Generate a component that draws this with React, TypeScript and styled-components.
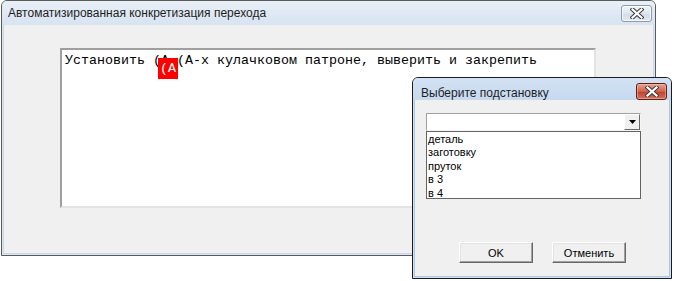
import * as React from "react";
import styled, { createGlobalStyle } from "styled-components";

const GlobalStyle = createGlobalStyle`
  html, body {
    margin: 0;
    padding: 0;
    background: #ffffff;
    overflow: hidden;
  }
  body {
    font-family: "Liberation Sans", Arial, sans-serif;
  }
`;

const CloseGlyph = () => (
  <svg width="14" height="11" viewBox="0 0 14 11">
    <path
      d="M2.5 1.5 L11.5 9.5 M11.5 1.5 L2.5 9.5"
      stroke="#3c3c3c"
      strokeWidth="4.2"
      strokeLinecap="square"
      fill="none"
    />
    <path
      d="M2.5 1.5 L11.5 9.5 M11.5 1.5 L2.5 9.5"
      stroke="#ffffff"
      strokeWidth="2.2"
      strokeLinecap="square"
      fill="none"
    />
  </svg>
);

const App = () => {
  const items = ["деталь", "заготовку", "пруток", "в 3", "в 4"];

  return (
    <>
      <GlobalStyle />
      <Desktop>
        <MainWindow>
          <MainTitleBar>
            <TitleText>Автоматизированная конкретизация перехода</TitleText>
            <CloseButton variant="gray">
              <CloseGlyph />
            </CloseButton>
          </MainTitleBar>
          <MainClient>
            <TextArea>
              <EditorLine>
                Установить (А (А-х кулачковом патроне, выверить и закрепить
              </EditorLine>
              <Marker>(А</Marker>
            </TextArea>
          </MainClient>
        </MainWindow>

        <Dialog>
          <DialogTitleBar>
            <TitleText>Выберите подстановку</TitleText>
            <CloseButton variant="red">
              <CloseGlyph />
            </CloseButton>
          </DialogTitleBar>
          <DialogClient>
            <Combo>
              <ComboField />
              <ComboArrow>
                <svg width="7" height="4" viewBox="0 0 7 4">
                  <path d="M0 0 L7 0 L3.5 4 Z" fill="#000" />
                </svg>
              </ComboArrow>
            </Combo>
            <List>
              {items.map((item) => (
                <ListItem key={item}>{item}</ListItem>
              ))}
            </List>
            <ButtonRow>
              <PushButton>OK</PushButton>
              <PushButton>Отменить</PushButton>
            </ButtonRow>
          </DialogClient>
        </Dialog>
      </Desktop>
    </>
  );
};

const Desktop = styled.div`
  position: relative;
  width: 675px;
  height: 281px;
  background: #ffffff;
  overflow: hidden;
`;

const MainWindow = styled.div`
  position: absolute;
  left: 1px;
  top: 0;
  width: 655px;
  height: 256px;
  box-sizing: border-box;
  border: 1px solid #5a5a5a;
  border-radius: 6px 6px 0 0;
  display: flex;
  flex-direction: column;
  background: #dbe5f1;
`;

const MainTitleBar = styled.div`
  height: 24px;
  flex: none;
  display: flex;
  align-items: center;
  justify-content: space-between;
  padding: 0 3px 0 6px;
  border-radius: 5px 5px 0 0;
  background: linear-gradient(#e9eff7, #d7e3f1);
`;

const TitleText = styled.span`
  font-family: "Liberation Sans", Arial, sans-serif;
  font-size: 12px;
  color: #1e1e1e;
  white-space: nowrap;
`;

const CloseButton = styled.div<{ variant: "gray" | "red" }>`
  width: 31px;
  height: 17px;
  box-sizing: border-box;
  border-radius: 3px;
  display: flex;
  align-items: center;
  justify-content: center;
  border: 1px solid
    ${(p) => (p.variant === "red" ? "#5e1f16" : "#8c9bb0")};
  background: ${(p) =>
    p.variant === "red"
      ? "linear-gradient(#e6a493, #d0604a 50%, #c0402a 51%, #d2715d)"
      : "linear-gradient(#f1f4f8, #dfe6ef 50%, #d3dce8 51%, #e2e8f0)"};
  box-shadow: inset 0 0 0 1px
    ${(p) => (p.variant === "red" ? "rgba(255,200,180,0.5)" : "rgba(255,255,255,0.7)")};
`;

const MainClient = styled.div`
  flex: 1;
  margin: 0 1px 1px 1px;
  border: 1px solid #c9d8ea;
  border-top: none;
  background: #f0f0f0;
  padding: 23px 0 0 56px;
`;

const TextArea = styled.div`
  position: relative;
  width: 536px;
  height: 160px;
  box-sizing: border-box;
  background: #ffffff;
  border-top: 2px solid #9f9f9f;
  border-left: 2px solid #9f9f9f;
  border-right: 2px solid #e3e3e3;
  border-bottom: 2px solid #e3e3e3;
  padding: 3px 0 0 3px;
`;

const EditorLine = styled.div`
  font-family: "Liberation Mono", "Courier New", monospace;
  font-size: 13.33px;
  line-height: 16px;
  color: #000;
  white-space: pre;
`;

const Marker = styled.span`
  position: absolute;
  left: 96px;
  top: 8px;
  width: 20px;
  height: 21px;
  background: #ff0000;
  color: #ffffff;
  font-family: "Liberation Mono", "Courier New", monospace;
  font-size: 13.33px;
  line-height: 21px;
  padding-left: 2px;
  box-sizing: border-box;
`;

const Dialog = styled.div`
  position: absolute;
  left: 412px;
  top: 77px;
  width: 260px;
  height: 202px;
  box-sizing: border-box;
  border: 1px solid #1c1c1c;
  border-radius: 6px 6px 0 0;
  background: #cfe0f3;
  display: flex;
  flex-direction: column;
`;

const DialogTitleBar = styled.div`
  height: 22px;
  flex: none;
  display: flex;
  align-items: flex-start;
  justify-content: space-between;
  padding: 5px 4px 0 8px;
  box-sizing: border-box;
  border-radius: 5px 5px 0 0;
  background: linear-gradient(#d3e2f4, #c6d9ef);
  ${TitleText} {
    margin-top: 3px;
  }
`;

const DialogClient = styled.div`
  flex: 1;
  margin: 0 1px 1px 1px;
  border: 1px solid #a9c8ea;
  border-top: none;
  background: #f0f0f0;
  padding: 13px 0 0 11px;
  display: flex;
  flex-direction: column;
`;

const Combo = styled.div`
  width: 215px;
  height: 18px;
  box-sizing: border-box;
  display: flex;
  border-top: 1px solid #a0a0a0;
  border-left: 1px solid #a0a0a0;
  border-right: 1px solid #f5f5f5;
  border-bottom: 1px solid #f5f5f5;
  background: #ffffff;
`;

const ComboField = styled.div`
  flex: 1;
`;

const ComboArrow = styled.div`
  width: 16px;
  box-sizing: border-box;
  display: flex;
  align-items: center;
  justify-content: center;
  background: #f0f0f0;
  border-top: 1px solid #ffffff;
  border-left: 1px solid #ffffff;
  border-right: 1px solid #6b6b6b;
  border-bottom: 1px solid #6b6b6b;
  margin: 0;
`;

const List = styled.div`
  width: 215px;
  height: 68px;
  box-sizing: border-box;
  border: 1px solid #646464;
  background: #ffffff;
  padding: 1px 0 0 1px;
  overflow: hidden;
`;

const ListItem = styled.div`
  font-family: "Liberation Sans", Arial, sans-serif;
  font-size: 11px;
  line-height: 13.4px;
  color: #000;
`;

const ButtonRow = styled.div`
  display: flex;
  gap: 19px;
  margin-top: 43px;
  padding-left: 33px;
`;

const PushButton = styled.div`
  width: 74px;
  height: 21px;
  box-sizing: border-box;
  display: flex;
  align-items: center;
  justify-content: center;
  font-family: "Liberation Sans", Arial, sans-serif;
  font-size: 11px;
  color: #000;
  background: #f0f0f0;
  border-top: 1px solid #ffffff;
  border-left: 1px solid #ffffff;
  border-right: 1px solid #696969;
  border-bottom: 1px solid #696969;
  box-shadow: inset -1px -1px 0 #a0a0a0, inset 1px 1px 0 #e3e3e3;
`;

export default App;
